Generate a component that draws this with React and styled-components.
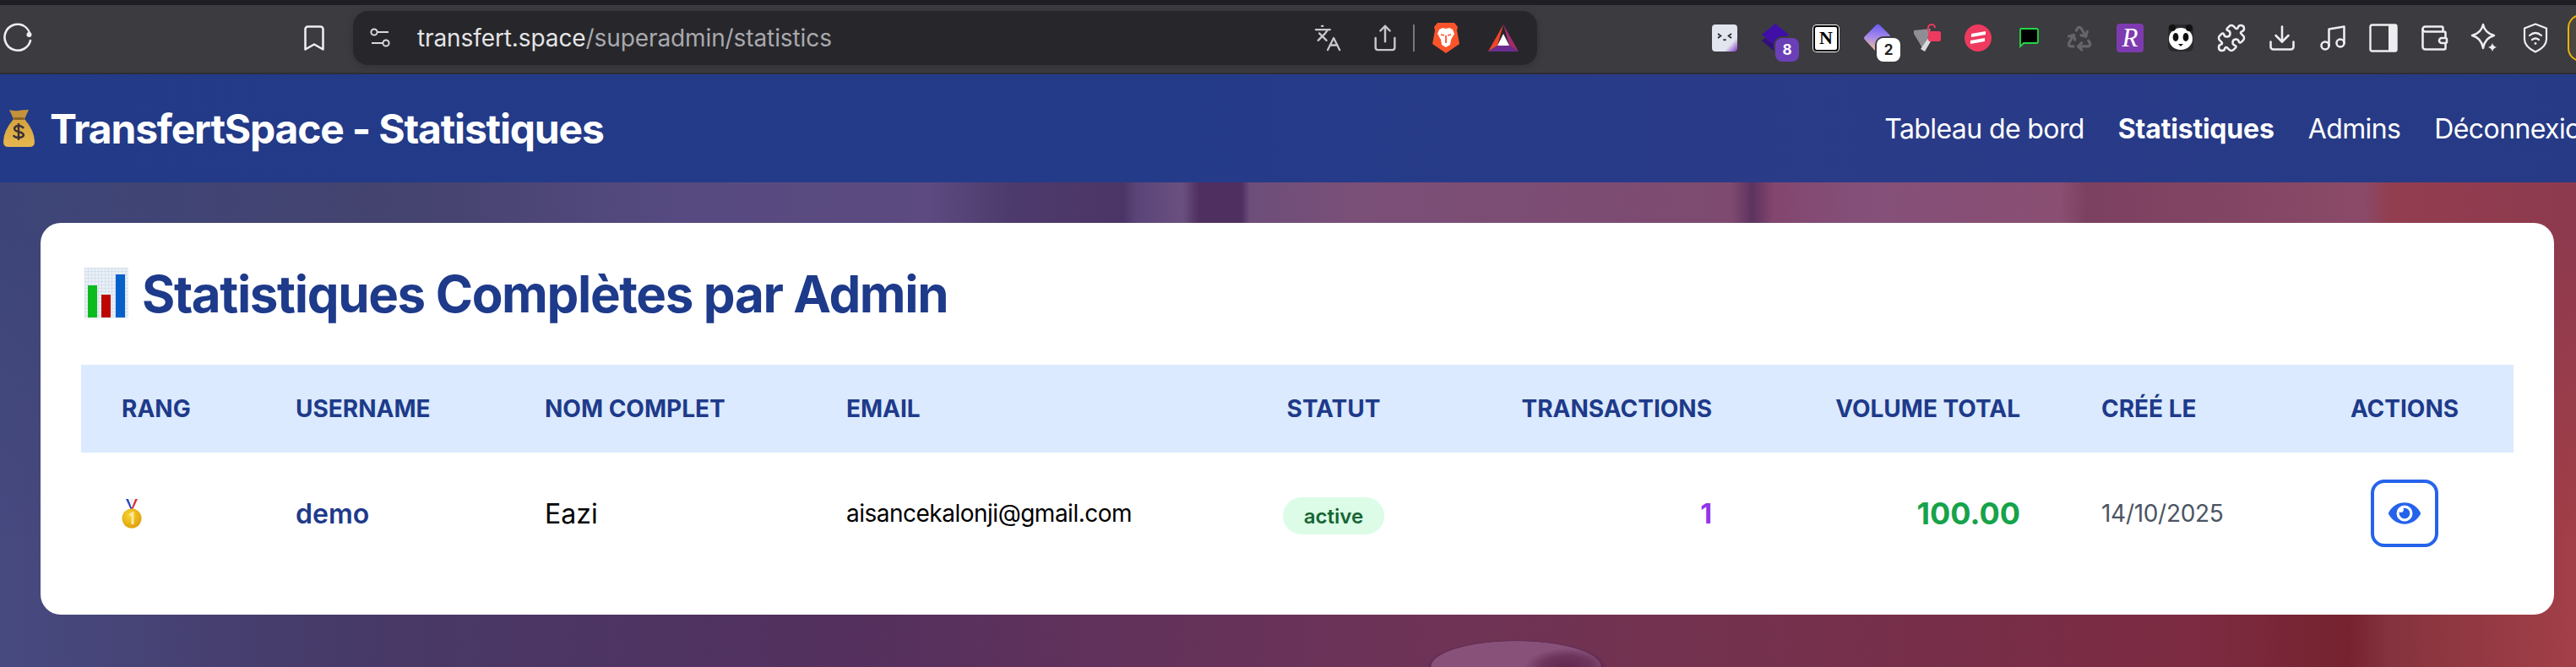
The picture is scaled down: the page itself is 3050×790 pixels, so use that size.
import React from 'react';
import styled, { createGlobalStyle } from 'styled-components';
import { Bookmark, Share, Languages, Puzzle, Download, Music, Wallet, Recycle } from 'lucide-react';
import { FaEye } from 'react-icons/fa';

const FONT = `Inter, "Liberation Sans", sans-serif`;
const COLUMNS = '206px 295px 357px 471px 308px 342px 365px 278px 258px';

const GlobalStyle = createGlobalStyle`
  html, body { margin: 0; padding: 0; background: #3c3b40; overflow: hidden; }
  * { box-sizing: border-box; }
`;

const Page = styled.div`
  width: 3050px;
  height: 790px;
  overflow: hidden;
  font-family: ${FONT};
  display: flex;
  flex-direction: column;
`;

const TopStrip = styled.div`
  height: 6px;
  background: #1e1e24;
  flex: none;
`;

const Toolbar = styled.div`
  height: 82px;
  flex: none;
  display: flex;
  align-items: center;
  background: #3c3b40;
  border-bottom: 2px solid #2e2e33;
  padding-bottom: 2px;
`;

const ToolbarLeft = styled.div`
  width: 418px;
  flex: none;
  display: flex;
  align-items: center;
  justify-content: space-between;
  padding: 0 28px 0 3px;
  color: #eeeef0;
`;

const AddressBar = styled.div`
  width: 1402px;
  height: 64px;
  flex: none;
  border-radius: 18px;
  background: #27272b;
  box-shadow: 0 2px 8px rgba(0, 0, 0, 0.18);
  display: flex;
  align-items: center;
  padding: 0 22px 0 20px;
  color: #c9c9cd;
`;

const Url = styled.div`
  margin-left: 32px;
  font-size: 28px;
  letter-spacing: -0.1px;
  color: #a9a9ae;
  flex: 1;
  white-space: nowrap;
`;

const UrlHost = styled.span`
  color: #e4e4e7;
`;

const AddressActions = styled.div`
  display: flex;
  align-items: center;
`;

const TranslateIcon = styled(Languages)`
  margin-right: 34px;
`;

const Divider = styled.div`
  width: 2px;
  height: 32px;
  background: #77777c;
  margin: 0 21px 0 16px;
`;

const RewardsSlot = styled.span`
  display: flex;
  margin-left: 34px;
`;

const ExtensionTray = styled.div`
  margin-left: 192px;
  flex: none;
  display: flex;
  align-items: center;
  color: #eeeef0;
`;

const Slot = styled.div`
  position: relative;
  width: 60px;
  height: 40px;
  display: flex;
  align-items: center;
  justify-content: center;
  flex: none;
`;

const CountBadge = styled.span`
  position: absolute;
  left: 30px;
  top: 20px;
  width: 28px;
  height: 28px;
  border-radius: 8px;
  display: flex;
  align-items: center;
  justify-content: center;
  font-size: 17px;
  font-weight: 700;
  background: ${(p) => p.$bg};
  color: ${(p) => p.$color};
  box-shadow: 0 0 0 2px #3c3b40;
`;

const NotionLogo = styled.span`
  width: 30px;
  height: 31px;
  border-radius: 4px;
  display: flex;
  align-items: center;
  justify-content: center;
  background: #fff;
  color: #000;
  border: 2.5px solid #000;
  box-shadow: 0 0 0 1px #fff;
  font-family: "Liberation Serif", serif;
  font-size: 22px;
  font-weight: 700;
`;

const ScriptLogo = styled.span`
  width: 32px;
  height: 34px;
  border-radius: 4px;
  display: flex;
  align-items: center;
  justify-content: center;
  background: #7e3bb0;
  color: #fff;
  font-family: "Liberation Serif", serif;
  font-size: 31px;
  font-style: italic;
`;

const ProfileEdge = styled.div`
  width: 40px;
  height: 56px;
  margin-left: 8px;
  flex: none;
  border: 2px solid #eab308;
  border-right: none;
  border-radius: 16px 0 0 16px;
  background: #4a4640;
`;

const Navbar = styled.nav`
  height: 128px;
  flex: none;
  display: flex;
  align-items: center;
  padding-left: 4px;
  color: #fff;
  background: linear-gradient(90deg, #223a88 0%, #243b89 45%, #2a3b88 70%, #263a86 100%);
`;

const Brand = styled.div`
  display: flex;
  align-items: center;
  gap: 18px;
  font-size: 48px;
  font-weight: 700;
  letter-spacing: -1.2px;
  white-space: nowrap;
`;

const NavLinks = styled.div`
  margin-left: auto;
  margin-right: -24px;
  display: flex;
  gap: 40px;
  flex: none;
`;

const NavLink = styled.a`
  font-size: 32px;
  font-weight: ${(p) => (p.$active ? 700 : 400)};
  letter-spacing: ${(p) => (p.$active ? '-0.2px' : '-0.6px')};
  white-space: nowrap;
  color: #fff;
`;

const Stage = styled.main`
  position: relative;
  flex: 1;
  padding: 48px 26px 0 48px;
  background:
    radial-gradient(ellipse 50px 22px at 1855px 574px, #62294f 0, rgba(98, 41, 79, 0.7) 60%, transparent 100%) no-repeat,
    radial-gradient(ellipse 105px 32px at 1795px 574px, #87517a 0 95%, #5f2a52 97%, transparent 100%) no-repeat,
    linear-gradient(90deg, #474a80 0, #463a68 400px, #54305e 1000px, #6c3358 1600px, #73324f 2000px, #7c2b42 2600px,
      #76232f 2780px, #85333e 2830px, #a33f48 3050px);

  /* the upper half of the blurred photo fades into the lower one behind the card */
  &::before {
    content: '';
    position: absolute;
    inset: 0;
    background: linear-gradient(90deg, #3d4578 0, #45436f 500px, #564a80 800px, #5c4a80 1100px, #4d3a6c 1200px,
      #4c3566 1330px, #5a4478 1345px, #6a5080 1400px, #4f2f5f 1420px, #4f2f5f 1470px, #6d4e7a 1480px, #7a4f78 1600px,
      #7e4a70 2050px, #5e3360 2075px, #83466e 2100px, #84507a 2200px, #8a4e72 2440px, #7c4060 2470px, #8a4a68 2800px,
      #923d50 2830px, #8e3a4e 3050px);
    mask-image: linear-gradient(180deg, #000 0, #000 60px, transparent 420px);
  }
`;

const Card = styled.section`
  position: relative;
  background: #fff;
  border-radius: 24px;
  padding: 48px;
  height: 464px;
`;

const Title = styled.h1`
  margin: 0;
  height: 120px;
  display: flex;
  align-items: flex-start;
  gap: 16px;
  padding: 5px 0 0 4px;
  font-size: 60px;
  line-height: 62px;
  font-weight: 700;
  letter-spacing: -1.35px;
  color: #1e3a8a;
  white-space: nowrap;
`;

const HeadRow = styled.div`
  display: grid;
  grid-template-columns: ${COLUMNS};
  height: 104px;
  align-items: center;
  background: #dbeafe;
`;

const HeadCell = styled.div`
  padding: 0 48px;
  text-align: ${(p) => p.$align || 'left'};
  font-size: 28px;
  font-weight: 700;
  text-transform: uppercase;
  color: #1e3a8a;
  white-space: nowrap;
`;

const BodyRow = styled.div`
  display: grid;
  grid-template-columns: ${COLUMNS};
  padding: 32px 0;
  align-items: center;
`;

const Cell = styled.div`
  padding: 0 48px;
  text-align: ${(p) => p.$align || 'left'};
  white-space: nowrap;
  font-size: ${(p) => p.$size || 32}px;
  font-weight: ${(p) => p.$weight || 400};
  letter-spacing: ${(p) => p.$tracking || 0}px;
  color: ${(p) => p.$color || '#000'};
`;

const RankCell = styled.div`
  display: flex;
  padding: 0 48px;
`;

const ActionCell = styled.div`
  display: flex;
  justify-content: center;
`;

const StatusPill = styled.span`
  display: inline-flex;
  align-items: center;
  justify-content: center;
  width: 120px;
  height: 44px;
  margin-top: 6px;
  border-radius: 22px;
  background: #dcfce7;
  color: #166534;
  font-size: 24px;
  font-weight: 600;
`;

const ViewButton = styled.button`
  width: 80px;
  height: 80px;
  border: 4px solid #2563eb;
  border-radius: 16px;
  background: #fff;
  color: #2563eb;
  padding: 0;
  display: flex;
  align-items: center;
  justify-content: center;
`;

const ReloadIcon = () => (
  <svg width="36" height="36" viewBox="0 0 36 36" fill="none" stroke="#eeeef0" strokeWidth="2.6" strokeLinecap="round">
    <path d="M33 21a15.500 15.500 0 1 1-9-18" />
    <path d="M24 3q6 3 8 9" strokeWidth="2.2" />
    <circle cx="31.500" cy="14" r="3" fill="#eeeef0" stroke="none" />
  </svg>
);

const TuneIcon = () => (
  <svg width="24" height="24" viewBox="0 0 24 24" fill="none" stroke="#d8d8dc" strokeWidth="2">
    <circle cx="5" cy="5" r="3.6" />
    <path d="M9 5h13M2 18h13" />
    <circle cx="19" cy="18" r="3.6" />
  </svg>
);

const BraveIcon = () => (
  <svg width="32" height="36" viewBox="0 0 32 36">
    <path d="M6 0h20l4 5-1 4 3 16-16 11L0 25 3 9 2 5z" fill="#fb542b" />
    <path d="M8 8l4-2 4 1 4-1 4 2 2 5-4 7-1 6-5 3-5-3-1-6-4-7z" fill="#fff" />
    <path d="M10 14l4 1M22 14l-4 1M16 15v9" stroke="#fb542b" strokeWidth="1.8" fill="none" />
  </svg>
);

const TriangleIcon = () => (
  <svg width="36" height="32" viewBox="0 0 36 32">
    <path d="M18 0L0 32l11-7z" fill="#f0452a" />
    <path d="M18 0l18 32-11-7z" fill="#a52a6e" />
    <path d="M0 32h36l-11-7H11z" fill="#6b2d92" />
    <path d="M18 11l7 14H11z" fill="#fff" />
  </svg>
);

const KaomojiIcon = () => (
  <svg width="30" height="32" viewBox="0 0 30 32">
    <defs>
      <linearGradient id="kao" x1="0.4" y1="0.4" x2="1" y2="1">
        <stop offset="0.55" stopColor="#e2e4ee" />
        <stop offset="1" stopColor="#7a35c4" />
      </linearGradient>
    </defs>
    <rect width="30" height="32" rx="4" fill="url(#kao)" />
    <path d="M7 11l3.500 2.500L7 16M23 11l-3.500 2.500L23 16" stroke="#222" strokeWidth="1.6" fill="none" />
    <path d="M13.500 17.500q1.500 2 3 0" stroke="#222" strokeWidth="1.6" fill="none" />
  </svg>
);

const LayersIcon = () => (
  <svg width="32" height="34" viewBox="0 0 32 34">
    <path d="M16 0l16 13-16 13L0 13z" fill="#3f0fa8" />
    <path d="M0 20l4-3 12 9 4-2-4 10z" fill="#32107c" />
  </svg>
);

const GemIcon = () => (
  <svg width="32" height="34" viewBox="0 0 32 34">
    <defs>
      <linearGradient id="gem" x1="0.5" y1="0" x2="0.4" y2="1">
        <stop offset="0" stopColor="#6a5cf5" />
        <stop offset="0.5" stopColor="#a98ce8" />
        <stop offset="1" stopColor="#f2c08f" />
      </linearGradient>
    </defs>
    <path d="M16 1q2-1 4 1l11 11q2 2 0 4L18 32q-2 2-4 0L2 19q-2-2 0-4z" fill="url(#gem)" />
  </svg>
);

const LockShapeIcon = () => (
  <svg width="34" height="34" viewBox="0 0 34 34" fill="none">
    <path d="M1 8l20-2-4 12-4 14L1 12z" fill="#8e8e94" />
    <path d="M9 30l9-13 7-3-11 19z" fill="#d9d9dd" />
    <rect x="18" y="9" width="15" height="12" rx="2" fill="#ee3a5f" />
    <path d="M18 9V5a4 4 0 0 1 8 0" stroke="#ee3a5f" strokeWidth="2" />
  </svg>
);

const StripesIcon = () => (
  <svg width="32" height="32" viewBox="0 0 32 32">
    <circle cx="16" cy="16" r="16" fill="#ee3a5f" />
    <path d="M8 11l17-3v4L8 15zM7 19l17-3v4l-17 3z" fill="#fff" />
  </svg>
);

const ChatIcon = () => (
  <svg width="24" height="24" viewBox="0 0 24 24">
    <path d="M3 1h18q2 0 2 2v13q0 2-2 2H6l-4 4V3q0-2 1-2z" fill="#000" stroke="#22d845" strokeWidth="1.8" />
  </svg>
);

const PandaIcon = () => (
  <svg width="30" height="32" viewBox="0 0 30 32">
    <rect width="30" height="32" rx="6" fill="#2a2a2d" />
    <ellipse cx="15" cy="17" rx="14" ry="13" fill="#fff" />
    <circle cx="5" cy="4" r="4" fill="#111" />
    <circle cx="25" cy="4" r="4" fill="#111" />
    <ellipse cx="9" cy="15" rx="3.400" ry="5" fill="#111" />
    <ellipse cx="21" cy="15" rx="3.400" ry="5" fill="#111" />
    <path d="M12 23h6l-3 3z" fill="#111" />
  </svg>
);

const SidebarIcon = () => (
  <svg width="34" height="34" viewBox="0 0 34 34" fill="none">
    <rect x="1.500" y="1.500" width="31" height="31" rx="2" stroke="#eeeef0" strokeWidth="2.400" />
    <rect x="23" y="1.500" width="9.500" height="31" fill="#eeeef0" />
  </svg>
);

const SparkleIcon = () => (
  <svg width="34" height="36" viewBox="0 0 34 36" fill="none" stroke="#eeeef0" strokeWidth="2.400" strokeLinejoin="round">
    <path d="M15 2q2 10 13 13q-11 3-13 15q-2-12-13-15q11-3 13-13z" />
    <path d="M26 24q1 4 5 5q-4 1-5 5q-1-4-5-5q4-1 5-5z" fill="#eeeef0" stroke="none" />
  </svg>
);

const ShieldWifiIcon = () => (
  <svg width="30" height="36" viewBox="0 0 30 36" fill="none" stroke="#eeeef0" strokeWidth="2.200" strokeLinecap="round">
    <path d="M15 1.500l13 5v13q0 9-13 15q-13-6-13-15v-13z" strokeLinejoin="round" />
    <path d="M8 15q7-6 14 0M11 20q4-3 8 0" />
    <circle cx="15" cy="24.500" r="1.400" fill="#eeeef0" stroke="none" />
  </svg>
);

const MoneyBagIcon = () => (
  <svg width="37" height="44" viewBox="0 0 37 44">
    <defs>
      <linearGradient id="bag" x1="0" y1="0" x2="0" y2="1">
        <stop offset="0" stopColor="#d6a33e" />
        <stop offset="1" stopColor="#e6b84e" />
      </linearGradient>
    </defs>
    <path d="M7 0q6 2 11 1t12-1l-5 11H12z" fill="#c4923c" />
    <path d="M12 11h13q12 14 12 27q0 6-6 6H6q-6 0-6-6q0-13 12-27z" fill="url(#bag)" />
    <rect x="12" y="9" width="13" height="3" rx="1.500" fill="#8c6424" />
    <path d="M24 22q-2-3-6-3t-5 3q0 3 5 4t6 4q-1 3-6 3t-6-3M18 16v20" stroke="#3a3038" strokeWidth="2.400" fill="none" />
  </svg>
);

const ChartIcon = () => (
  <svg width="52" height="60" viewBox="0 0 52 60">
    <defs>
      <pattern id="grid" width="4" height="4" patternUnits="userSpaceOnUse">
        <rect width="4" height="4" fill="#e9eff6" />
        <path d="M0 0h4M0 0v4" stroke="#c7d5e4" strokeWidth="1" />
      </pattern>
    </defs>
    <rect width="52" height="60" fill="url(#grid)" />
    <rect x="4" y="21" width="11" height="38" fill="#0cbb1d" />
    <rect x="20" y="32" width="11" height="27" fill="#bd0600" />
    <rect x="37" y="8" width="11" height="51" fill="#0561c9" />
  </svg>
);

const MedalIcon = () => (
  <svg width="24" height="35" viewBox="0 0 24 35">
    <defs>
      <radialGradient id="gold" cx="0.4" cy="0.35" r="0.75">
        <stop offset="0" stopColor="#f9d531" />
        <stop offset="1" stopColor="#dc9a06" />
      </radialGradient>
    </defs>
    <path d="M5 0l6 13h2L8 0z" fill="#2a4bc4" />
    <path d="M19 0l-6 13h-2L16 0z" fill="#d8343a" />
    <path d="M10.500 0l1.500 10 1.500-10z" fill="#e8e8ee" />
    <circle cx="12" cy="23" r="11.500" fill="url(#gold)" />
    <path d="M9.500 19l3.500-2v13" stroke="#fbe9a0" strokeWidth="3" fill="none" />
  </svg>
);

const NAV_ITEMS = [
  { label: 'Tableau de bord' },
  { label: 'Statistiques', active: true },
  { label: 'Admins' },
  { label: 'Déconnexion' },
];

const HEADERS = [
  { label: 'Rang' },
  { label: 'Username' },
  { label: 'Nom complet' },
  { label: 'Email' },
  { label: 'Statut', align: 'center' },
  { label: 'Transactions', align: 'right' },
  { label: 'Volume total', align: 'right' },
  { label: 'Créé le' },
  { label: 'Actions', align: 'center' },
];

const App = () => {
  return (
    <Page>
      <GlobalStyle />
      <TopStrip />
      <Toolbar>
        <ToolbarLeft>
          <ReloadIcon />
          <Bookmark size={36} strokeWidth={1.7} />
        </ToolbarLeft>
        <AddressBar>
          <TuneIcon />
          <Url><UrlHost>transfert.space</UrlHost>/superadmin/statistics</Url>
          <AddressActions>
            <TranslateIcon size={34} strokeWidth={1.6} />
            <Share size={34} strokeWidth={1.7} />
            <Divider />
            <BraveIcon />
            <RewardsSlot><TriangleIcon /></RewardsSlot>
          </AddressActions>
        </AddressBar>
        <ExtensionTray>
          <Slot><KaomojiIcon /></Slot>
          <Slot><LayersIcon /><CountBadge $bg="#6b3fb8" $color="#fff">8</CountBadge></Slot>
          <Slot><NotionLogo>N</NotionLogo></Slot>
          <Slot><GemIcon /><CountBadge $bg="#fff" $color="#222">2</CountBadge></Slot>
          <Slot><LockShapeIcon /></Slot>
          <Slot><StripesIcon /></Slot>
          <Slot><ChatIcon /></Slot>
          <Slot><Recycle size={34} color="#66666a" strokeWidth={2.2} /></Slot>
          <Slot><ScriptLogo>R</ScriptLogo></Slot>
          <Slot><PandaIcon /></Slot>
          <Slot><Puzzle size={36} strokeWidth={1.7} /></Slot>
          <Slot><Download size={36} strokeWidth={1.7} /></Slot>
          <Slot><Music size={36} strokeWidth={1.7} /></Slot>
          <Slot><SidebarIcon /></Slot>
          <Slot><Wallet size={36} strokeWidth={1.7} /></Slot>
          <Slot><SparkleIcon /></Slot>
          <Slot><ShieldWifiIcon /></Slot>
        </ExtensionTray>
        <ProfileEdge />
      </Toolbar>

      <Navbar>
        <Brand><MoneyBagIcon />TransfertSpace - Statistiques</Brand>
        <NavLinks>
          {NAV_ITEMS.map((item) => (
            <NavLink key={item.label} $active={item.active}>{item.label}</NavLink>
          ))}
        </NavLinks>
      </Navbar>

      <Stage>
        <Card>
          <Title><ChartIcon />Statistiques Complètes par Admin</Title>
          <HeadRow>
            {HEADERS.map((h) => (
              <HeadCell key={h.label} $align={h.align}>{h.label}</HeadCell>
            ))}
          </HeadRow>
          <BodyRow>
            <RankCell><MedalIcon /></RankCell>
            <Cell $weight={600} $color="#1e3a8a">demo</Cell>
            <Cell>Eazi</Cell>
            <Cell $size={28} $tracking={-0.5}>aisancekalonji@gmail.com</Cell>
            <Cell $align="center"><StatusPill>active</StatusPill></Cell>
            <Cell $align="right" $weight={700} $color="#9333ea">1</Cell>
            <Cell $align="right" $size={36} $weight={700} $color="#16a34a">100.00</Cell>
            <Cell $size={28} $color="#4b5563" $tracking={-0.3}>14/10/2025</Cell>
            <ActionCell><ViewButton><FaEye size={38} /></ViewButton></ActionCell>
          </BodyRow>
        </Card>
      </Stage>
    </Page>
  );
};

export default App;
